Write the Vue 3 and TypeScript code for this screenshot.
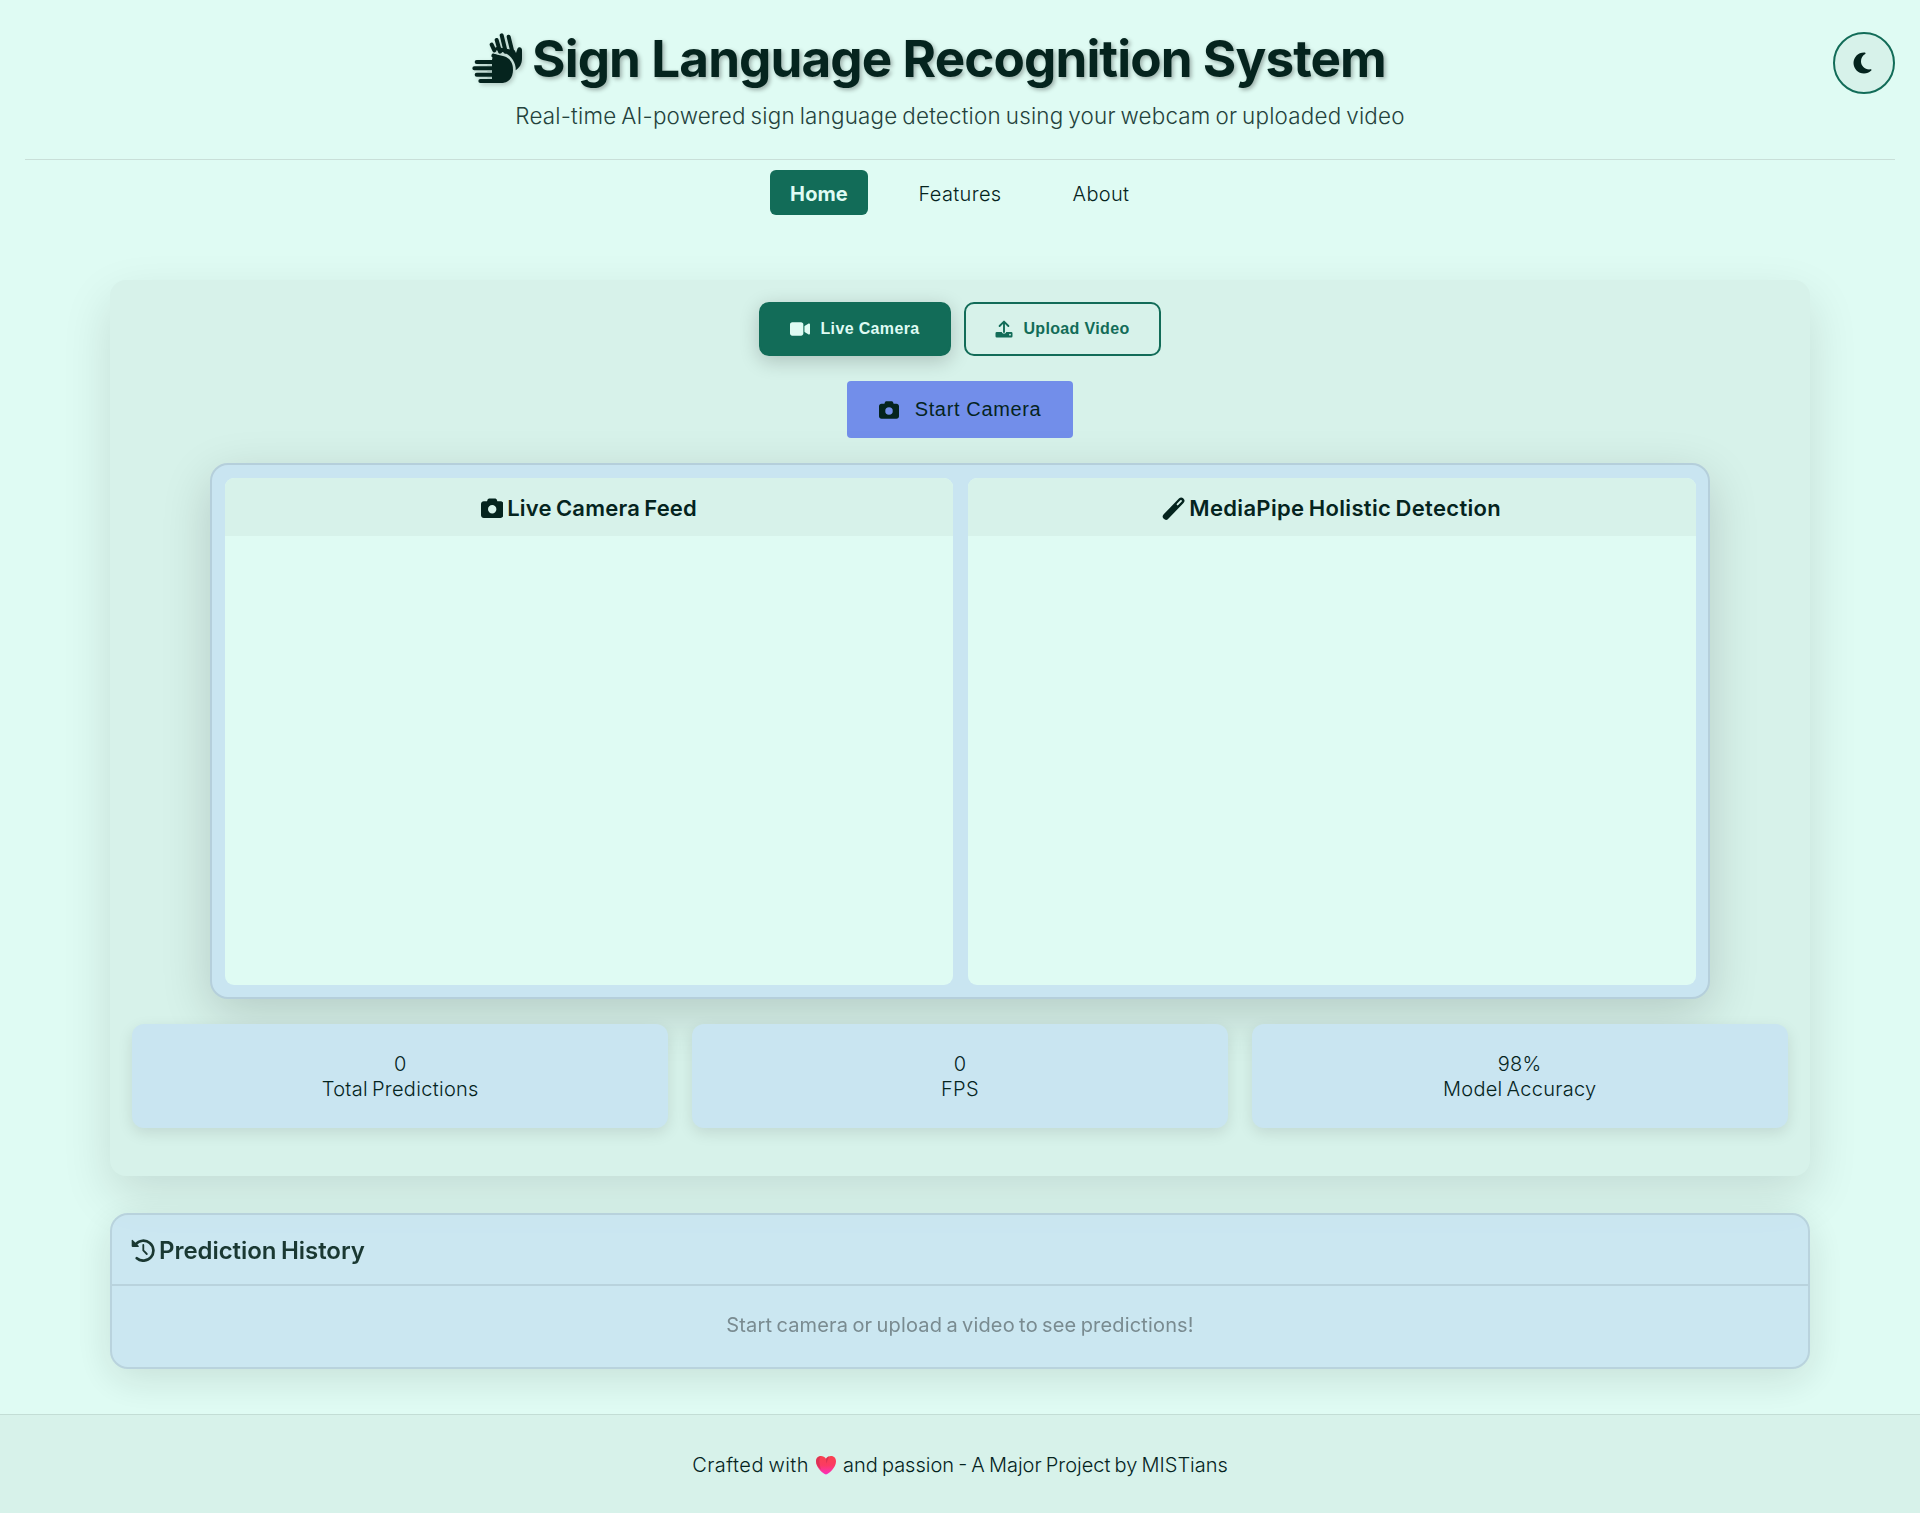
<script setup lang="ts">
import { ref } from 'vue'

const links = ['Home', 'Features', 'About']
const active = ref('Home')

const stats = [
  { value: '0', label: 'Total Predictions' },
  { value: '0', label: 'FPS' },
  { value: '98%', label: 'Model Accuracy' },
]

const cameraPath =
  'M149.1 64.8L138.7 96H64C28.7 96 0 124.7 0 160V416c0 35.3 28.7 64 64 64H448c35.3 0 64-28.7 64-64V160c0-35.3-28.7-64-64-64H373.3L362.9 64.8C356.4 45.2 338.1 32 317.4 32H194.6c-20.7 0-39 13.2-45.5 32.8zM256 184a96 96 0 1 1 0 192 96 96 0 1 1 0-192z'
</script>

<template>
  <div class="page">
    <header class="header">
      <div class="header-row">
        <h1 class="title">
          <svg class="hands" viewBox="0 0 150 150" aria-hidden="true">
            <g fill="none" stroke="currentColor" stroke-width="12" stroke-linecap="round" stroke-linejoin="round">
              <path d="M59 35L67 52M74 21L84 56M89 7L101 56M110 11L122 60" />
              <path d="M14 87H80M7 106H80M14 125H80M25 144H90" />
              <path d="M64 68L84 76" />
            </g>
            <path d="M62 48L74 42L128 52L132 60L136 48C138 40 149 41 150 50L150 76C150 93 143 104 131 112L131 104C128 80 112 62 88 56Z" fill="currentColor" />
            <path d="M60 81L64 62L96 70C114 76 123 90 123 110C123 134 110 150 86 150H60Z" fill="currentColor" />
            <path d="M46 96.500H60M46 115.500H60M46 134.500H60" class="finger-gap" />
          </svg>
          <span>Sign Language Recognition System</span>
        </h1>
        <button class="theme" aria-label="Toggle theme">
          <svg viewBox="0 0 384 512" aria-hidden="true"><path fill="currentColor" d="M223.500 32C100 32 0 132.300 0 256S100 480 223.500 480c60.600 0 115.500-24.200 155.800-63.400c5-4.900 6.300-12.500 3.100-18.700s-10.100-9.700-17-8.500c-9.800 1.700-19.800 2.600-30.100 2.600c-96.900 0-175.500-78.800-175.500-176c0-65.800 36-123.100 89.300-153.300c6.100-3.500 9.200-10.500 7.700-17.300s-7.300-11.900-14.300-12.500c-6.300-.5-12.600-.8-19-.8z" /></svg>
        </button>
      </div>
      <p class="subtitle">Real-time AI-powered sign language detection using your webcam or uploaded video</p>
    </header>

    <nav class="nav">
      <a v-for="l in links" :key="l" class="link" :class="{ active: l === active }" @click="active = l"><span>{{ l }}</span></a>
    </nav>

    <main class="main">
      <section class="panel">
        <div class="modes">
          <button class="mode live">
            <svg width="20" height="18" viewBox="0 0 576 512" aria-hidden="true"><path fill="currentColor" d="M0 128C0 92.700 28.700 64 64 64H320c35.300 0 64 28.700 64 64V384c0 35.300-28.700 64-64 64H64c-35.300 0-64-28.700-64-64V128zM559.100 99.800c10.400 5.600 16.900 16.400 16.900 28.200V384c0 11.800-6.500 22.600-16.900 28.200s-23 5-32.900-1.600l-96-64L416 337.100V174.900l14.200-9.500 96-64c9.800-6.500 22.400-7.200 32.900-1.600z" /></svg>
            <span>Live Camera</span>
          </button>
          <button class="mode upload">
            <svg width="18" height="18" viewBox="0 0 18 18" aria-hidden="true">
              <path d="M9 12V2M4.600 6L9 1.600L13.400 6" fill="none" stroke="currentColor" stroke-width="1.900" stroke-linecap="round" stroke-linejoin="round" />
              <path fill="currentColor" fill-rule="evenodd" d="M1.800 12H6.800C7 13 8 13.700 9 13.700S11 13 11.200 12H16.200Q17.500 12 17.500 13.300V16.200Q17.500 17.500 16.200 17.500H1.800Q.5 17.500 .5 16.200V13.300Q.5 12 1.800 12ZM15 13.800a.9.9 0 1 0 0 1.800a.9.900 0 0 0 0-1.800Z" />
            </svg>
            <span>Upload Video</span>
          </button>
        </div>

        <button class="start">
          <svg width="20" height="20" viewBox="0 0 512 512" aria-hidden="true"><path fill="currentColor" :d="cameraPath" /></svg>
          <span>Start Camera</span>
        </button>

        <div class="videos">
          <div class="video">
            <h3>
              <svg width="22.400" height="22.400" viewBox="0 0 512 512" aria-hidden="true"><path fill="currentColor" :d="cameraPath" /></svg>
              <span class="feed">Live Camera Feed</span>
            </h3>
          </div>
          <div class="video">
            <h3>
              <svg width="23" height="23" viewBox="0 0 23 23" aria-hidden="true">
                <path d="M4 19.500L19.200 3.800" stroke="currentColor" stroke-width="6.400" stroke-linecap="round" />
                <path d="M15.600 7.400L19 3.900" stroke="#d7f2ea" stroke-width="1.900" stroke-linecap="round" />
              </svg>
              <span class="holistic">MediaPipe Holistic Detection</span>
            </h3>
          </div>
        </div>

        <div class="stats">
          <div v-for="s in stats" :key="s.label" class="stat">
            <div class="value">{{ s.value }}</div>
            <div class="label">{{ s.label }}</div>
          </div>
        </div>
      </section>

      <section class="history">
        <h3>
          <svg width="24" height="24" viewBox="0 0 24 24" aria-hidden="true">
            <path d="M4.600 6.400A10 10 0 1 1 5.800 20.200" fill="none" stroke="currentColor" stroke-width="2.700" stroke-linecap="round" />
            <path d="M.7 2.600Q.7 1.400 1.700 2L7.800 7.900Q8.300 9 7 9H1.700Q.7 9 .7 8Z" fill="currentColor" />
            <path d="M12.300 7V12.400L15.800 16" fill="none" stroke="currentColor" stroke-width="1.800" stroke-linecap="round" />
          </svg>
          <span>Prediction History</span>
        </h3>
        <p><span>Start camera or upload a video to see predictions!</span></p>
      </section>
    </main>

    <footer class="footer">
      <span class="made">Crafted with</span>
      <svg width="22" height="20" viewBox="0 0 22 20" aria-hidden="true">
        <defs>
          <linearGradient id="heart" x1="0" y1="0" x2="0" y2="1">
            <stop offset="0" stop-color="#f8434f" />
            <stop offset=".5" stop-color="#fc3a63" />
            <stop offset="1" stop-color="#fb2fc0" />
          </linearGradient>
        </defs>
        <path fill="url(#heart)" d="M11 19.500C8 18.500 1 12.500 1 6.400C1 .2 8.300-.5 11 3.700C13.700-.5 21 .2 21 6.400C21 12.500 14 18.500 11 19.500Z" />
        <path fill="#c42a50" opacity=".55" d="M1 6.400C1 3.500 3 1.300 5.600 1.200C4 4 4 8 6 14.500C3.500 12.200 1 9.500 1 6.400ZM11 3.700C11.900 2.400 13 1.600 14.200 1.300C13 4 12.500 6 11 8.500Z" />
      </svg>
      <span class="credit">and passion - A Major Project by MISTians</span>
    </footer>
  </div>
</template>

<style>
body {
  background: #dffbf3;
}
</style>

<style scoped>
.page {
  height: 1513px;
  box-sizing: border-box;
  display: flex;
  flex-direction: column;
  background: #dffbf3;
  color: #05241e;
  font-family: Inter, "Noto Sans", sans-serif;
  font-size: 20px;
  font-weight: 340;
  overflow: hidden;
}
.page *,
.page *::before {
  box-sizing: border-box;
}
svg {
  flex: none;
  display: block;
}
span,
.value,
.label {
  white-space: nowrap;
}
button {
  font-family: "Liberation Sans", Arial, sans-serif;
  color: inherit;
  padding: 0;
  display: flex;
  align-items: center;
  justify-content: center;
}
.header {
  margin: 0 25px;
  padding-top: 25px;
  height: 160px;
  border-bottom: 1px solid #c9dfd8;
}
.header-row {
  display: flex;
  height: 76px;
}
.title {
  flex: 1;
  margin: 0;
  height: 66px;
  display: flex;
  align-items: center;
  justify-content: center;
  gap: 10px;
  font-size: 51.200px;
  font-weight: 700;
  letter-spacing: -0.900px;
  text-shadow: 2px 2px 4px rgba(0, 0, 0, 0.3);
}
.hands {
  width: 50px;
  height: 50px;
  overflow: visible;
  filter: drop-shadow(2px 2px 2px rgba(0, 0, 0, 0.2));
}
.finger-gap {
  stroke: #8fa9a2;
  stroke-width: 1.500;
}
.theme {
  width: 62px;
  height: 62px;
  margin-top: 7px;
  border: 2px solid #126c58;
  border-radius: 50%;
  background: #d7f2ea;
}
.theme svg {
  width: 19px;
  height: 24px;
  margin-right: 4px;
}
.subtitle {
  margin: 0;
  line-height: 29px;
  text-align: center;
  font-size: 22.400px;
  letter-spacing: 0.200px;
  word-spacing: -1.600px;
  color: #24423c;
  font-weight: 300;
}
.nav {
  margin-top: 10px;
  display: flex;
  justify-content: center;
  gap: 31px;
}
.link {
  width: 98px;
  height: 45px;
  border-radius: 6px;
  display: flex;
  align-items: center;
  justify-content: center;
  padding-top: 2px;
  letter-spacing: 0.350px;
}
.link:nth-child(2) {
  width: 122px;
}
.link.active {
  background: #126c58;
  color: #dffbf3;
  font-weight: 700;
  letter-spacing: 0.100px;
}
.main {
  margin: 65px 110px 0;
}
.panel {
  height: 896px;
  padding: 22px 22.400px;
  border-radius: 16px;
  background: #d7f2ea;
  box-shadow: 0 20px 50px rgba(0, 0, 0, 0.12);
  display: flex;
  flex-direction: column;
  align-items: center;
}
.modes {
  display: flex;
  gap: 13px;
}
.mode {
  height: 54px;
  border: 2px solid #126c58;
  border-radius: 10px;
  font-size: 16px;
  font-weight: 700;
  letter-spacing: 0.350px;
  gap: 10px;
}
.live {
  width: 192px;
  background: #126c58;
  color: #dffbf3;
  box-shadow: 0 5px 20px rgba(0, 0, 0, 0.2);
}
.upload {
  width: 197px;
  background: transparent;
  color: #126c58;
}
.start {
  margin-top: 25px;
  width: 226px;
  height: 57px;
  border: 0;
  border-radius: 4px;
  background: #728eea;
  font-size: 20px;
  letter-spacing: 0.640px;
  gap: 16px;
}
.videos {
  margin-top: 25px;
  width: 1500px;
  height: 536px;
  padding: 13px 12.400px 12px 13px;
  border: 2px solid #b5cfdb;
  border-radius: 18px;
  background: #c9e5f1;
  box-shadow: 0 15px 50px rgba(0, 0, 0, 0.16);
  display: flex;
  gap: 15px;
}
.video {
  flex: 1;
  border-radius: 9px;
  background: #dffbf3;
  overflow: hidden;
}
.video h3 {
  margin: 0;
  height: 58px;
  padding-top: 2px;
  background: #d7f2ea;
  display: flex;
  align-items: center;
  justify-content: center;
  gap: 4px;
  font-size: 22px;
  font-weight: 600;
  word-spacing: -1.500px;
}
.feed {
  letter-spacing: 0.200px;
}
.holistic {
  letter-spacing: 0.330px;
}
.stats {
  margin-top: 25px;
  align-self: stretch;
  display: flex;
  gap: 24px;
}
.stat {
  flex: 1;
  height: 104px;
  padding-top: 28px;
  border-radius: 12px;
  background: #c9e5f1;
  box-shadow: 0 5px 15px rgba(0, 0, 0, 0.1);
  text-align: center;
  line-height: 25px;
  letter-spacing: 0.300px;
  word-spacing: -2px;
}
.history {
  margin-top: 37px;
  height: 156px;
  border: 2px solid #b5cfdb;
  border-radius: 18px;
  background: #c9e5f1;
  box-shadow: 0 10px 40px rgba(0, 0, 0, 0.12);
  opacity: 0.9;
}
.history h3 {
  margin: 0;
  height: 71px;
  padding: 1px 0 0 19px;
  border-bottom: 2px solid #b5cfdb;
  display: flex;
  align-items: center;
  gap: 4px;
  font-size: 24px;
  font-weight: 600;
  letter-spacing: -0.050px;
  word-spacing: -1.500px;
}
.history p {
  margin: 0;
  height: 77px;
  display: flex;
  align-items: center;
  justify-content: center;
  color: #6f7f86;
  font-weight: 400;
  letter-spacing: 0.160px;
  word-spacing: -1.500px;
}
.footer {
  margin-top: 45px;
  flex: 1;
  border-top: 1px solid #c3ddd5;
  background: #d7f2ea;
  display: flex;
  align-items: center;
  justify-content: center;
  gap: 6px;
  padding-top: 1px;
  word-spacing: -1.500px;
}
.made {
  letter-spacing: 0.450px;
}
</style>
